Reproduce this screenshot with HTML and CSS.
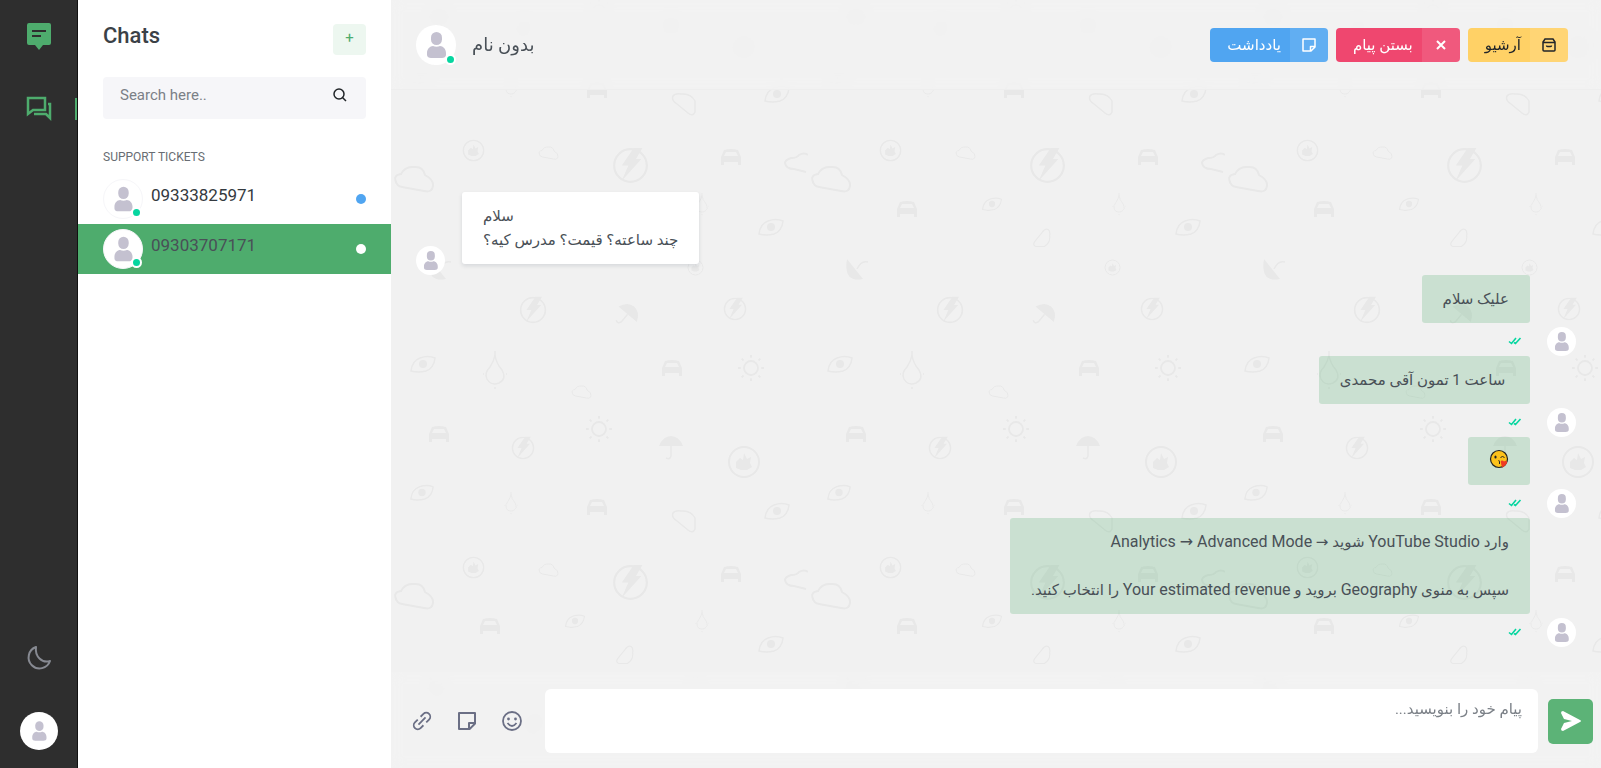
FILE: index.html
```html
<!DOCTYPE html>
<html lang="en">
<head>
    <meta charset="UTF-8">
    <meta name="viewport" content="width=device-width, initial-scale=1.0">
    <title>Chats</title>
    <link rel="stylesheet" href="styles.css">
</head>
<body>
    <!-- shared icons -->
    <svg class="sprite" aria-hidden="true">
        <symbol id="person" viewBox="0 0 40 40">
            <rect x="15" y="7" width="11" height="13" rx="5.5"/>
            <path d="M11 28c0-4 3-7 6-7 2 1 5 1 7 0 3 0 6 3 6 7v2c0 2-2 3-4 3H15c-2 0-4-1-4-3z"/>
        </symbol>
        <symbol id="note" viewBox="0 0 24 24">
            <path d="M21 15L15 21H4a1 1 0 0 1-1-1V4a1 1 0 0 1 1-1h16a1 1 0 0 1 1 1zM19 5H5v14h8v-5a1 1 0 0 1 1-1h5zM18.200 15H15v3.200z"/>
        </symbol>
        <symbol id="ticks" viewBox="0 0 14 8">
            <path d="M1 4.500 3.500 6.500 8 1M6 5.500 7.500 6.500 12.500 1" fill="none" stroke="currentColor" stroke-width="1.600"/>
        </symbol>
        <symbol id="p-bolt" viewBox="-17 -17 34 34">
            <circle r="15" fill="none" stroke="currentColor" stroke-width="2"/>
            <path d="M3-16h8L5-6h5L-8 14-2 0h-6z" fill="currentColor"/>
        </symbol>
        <symbol id="p-apple" viewBox="-17 -17 34 34">
            <circle r="15" fill="none" stroke="currentColor" stroke-width="2"/>
            <path d="M-8 0l4-4 3 2 1-7 3 6 4-2-1 6 2 4-5 3h-6l-5-2z" fill="currentColor"/>
        </symbol>
        <symbol id="p-car" viewBox="-11 -9 22 18">
            <path d="M-10 8V0l3-7q7-2 14 0l3 7v8H7V5H-7v3zM-7-1H7L5-5H-5z" fill="currentColor" fill-rule="evenodd"/>
        </symbol>
        <symbol id="p-eye" viewBox="-14 -10 28 20">
            <path d="M-12 7Q-11-3-3-6 5-9 12-6 11 4 3 7-5 9-12 7z" fill="none" stroke="currentColor" stroke-width="1.500"/>
            <circle r="4" fill="currentColor"/>
        </symbol>
        <symbol id="p-cloud" viewBox="-21 -14 42 28">
            <path d="M-18 3q-3-7 5-8 4-8 13-7 9-1 11 8 9 5 8 11-1 7-9 5L-12 8q-5-1-6-5z" fill="none" stroke="currentColor" stroke-width="2"/>
        </symbol>
        <symbol id="p-sun" viewBox="-15 -15 30 30">
            <circle r="7.500" fill="none" stroke="currentColor" stroke-width="2"/>
            <path d="M0-14v3M0 11v3M-14 0h3M11 0h3M-10-10l2 2M8 8l2 2M-10 10l2-2M8-8l2-2" stroke="currentColor" stroke-width="2"/>
        </symbol>
        <symbol id="p-umbrella" viewBox="-13 -13 26 26">
            <path d="M-12-1Q-8-11 0-11T12-1z" fill="currentColor"/>
            <path d="M0-1v10q-1 4-5 2" fill="none" stroke="currentColor" stroke-width="1.500"/>
        </symbol>
        <symbol id="p-drop" viewBox="-12 -20 24 40">
            <path d="M0-19v4q1 8 7 15 5 9-3 13-8 3-12-4-3-6 3-12 4-6 5-12M-12 4h1M11 4h1M0 17v2" fill="none" stroke="currentColor" stroke-width="1.500"/>
        </symbol>
        <symbol id="p-leaf" viewBox="-13 -13 26 26">
            <path d="M-11-8q2-3 8-2Q7-11 11-3V8q-2 5-7 1L-7 0q-6-4-4-8z" fill="none" stroke="currentColor" stroke-width="1.500"/>
        </symbol>
        <symbol id="p-dish" viewBox="-12 -12 24 24">
            <path d="M-9-11 7 9Q-13 13-9-11z" fill="currentColor"/>
            <path d="M1-1q4-9 11-7" fill="none" stroke="currentColor" stroke-width="1.500"/>
        </symbol>
    </svg>

    <div class="app">
        <nav class="rail" aria-label="Main">
            <a class="rail-link" href="#" aria-label="Home">
                <svg width="24" height="27" viewBox="0 0 24 27"><path fill="currentColor" fill-rule="evenodd" d="M2 0h20a2 2 0 0 1 2 2v18a2 2 0 0 1-2 2h-6l-4 5-4-5H2a2 2 0 0 1-2-2V2a2 2 0 0 1 2-2zM5 7v2h14V7zM5 12v2h9v-2z"/></svg>
            </a>
            <a class="rail-link active" href="#" aria-label="Chats">
                <svg width="26" height="26" viewBox="0 0 26 26" fill="none" stroke="currentColor" stroke-width="2.500"><path d="M2 2h17v12H7l-5 4zM8 18h12l4 4V8h-2"/></svg>
            </a>
            <button class="rail-link moon" type="button" aria-label="Dark mode">
                <svg width="26" height="26" viewBox="0 0 26 26" fill="none" stroke="currentColor" stroke-width="2" stroke-linejoin="round"><path d="M10 2a11 11 0 1 0 14 14q-6 2-10.500-2.500T10 2z"/></svg>
            </button>
            <button class="avatar profile" type="button" aria-label="Profile"><svg><use href="#person"/></svg></button>
        </nav>

        <aside class="sidebar">
            <div class="sidebar-top">
                <h1>Chats</h1>
                <button class="add" type="button" aria-label="New chat">+</button>
            </div>
            <form class="search">
                <input type="text" placeholder="Search here.." aria-label="Search">
                <button type="button" aria-label="Find">
                    <svg width="14" height="14" viewBox="0 0 14 14" fill="none" stroke="currentColor" stroke-width="1.500"><circle cx="6" cy="6" r="5"/><path d="M9.500 9.500 13 13"/></svg>
                </button>
            </form>
            <h2>SUPPORT TICKETS</h2>
            <ul class="tickets">
                <li>
                    <a class="ticket" href="#">
                        <span class="avatar"><svg><use href="#person"/></svg><i class="status"></i></span>
                        <span class="number">09333825971</span>
                        <i class="dot"></i>
                    </a>
                </li>
                <li>
                    <a class="ticket selected" href="#">
                        <span class="avatar"><svg><use href="#person"/></svg><i class="status"></i></span>
                        <span class="number">09303707171</span>
                        <i class="dot"></i>
                    </a>
                </li>
            </ul>
        </aside>

        <main class="chat">
            <svg class="wallpaper" aria-hidden="true">
                <defs>
                    <pattern id="doodles" x="0" y="120" width="417" height="417" patternUnits="userSpaceOnUse">
                        <svg x="0" y="0" width="417" height="417" viewBox="0 120 417 417">
                            <use href="#p-apple" x="71" y="139" width="23" height="23"/>
                            <use href="#p-cloud" x="147" y="146" width="21" height="14"/>
                            <use href="#p-bolt" x="221" y="147" width="37" height="37"/>
                            <use href="#p-car" x="329" y="148" width="22" height="18"/>
                            <path d="M417 155q-4-3-9 0-2 3-8 3-6 2-6 5 1 6 9 6l12 3" fill="none" stroke="currentColor" stroke-width="2"/>
                            <use href="#p-cloud" x="2" y="165" width="42" height="28"/>
                            <use href="#p-car" x="88" y="200" width="22" height="18"/>
                            <use href="#p-eye" x="173" y="196" width="22" height="16"/>
                            <use href="#p-drop" x="304" y="192" width="14" height="24"/>
                            <use href="#p-leaf" x="224" y="228" width="20" height="20" transform="rotate(90 234 238)"/>
                            <use href="#p-eye" x="366" y="217" width="28" height="20"/>
                            <use href="#p-dish" x="36" y="258" width="24" height="24"/>
                            <use href="#p-apple" x="296" y="259" width="17" height="17"/>
                            <use href="#p-bolt" x="128" y="296" width="28" height="28"/>
                            <use href="#p-umbrella" x="223" y="302" width="26" height="26" transform="rotate(40 236 315)"/>
                            <use href="#p-bolt" x="332" y="297" width="24" height="24"/>
                            <use href="#p-eye" x="18" y="354" width="28" height="20"/>
                            <use href="#p-drop" x="92" y="350" width="24" height="40"/>
                            <use href="#p-cloud" x="180" y="385" width="21" height="14"/>
                            <use href="#p-car" x="270" y="359" width="22" height="18"/>
                            <use href="#p-sun" x="346" y="354" width="28" height="28"/>
                            <use href="#p-car" x="37" y="425" width="22" height="18"/>
                            <use href="#p-sun" x="194" y="415" width="28" height="28"/>
                            <use href="#p-bolt" x="120" y="436" width="24" height="24"/>
                            <use href="#p-umbrella" x="267" y="434" width="26" height="26"/>
                            <use href="#p-apple" x="336" y="445" width="34" height="34"/>
                            <use href="#p-eye" x="18" y="483" width="26" height="19"/>
                            <use href="#p-drop" x="113" y="491" width="14" height="24"/>
                            <use href="#p-car" x="195" y="498" width="22" height="18"/>
                            <use href="#p-leaf" x="280" y="508" width="26" height="26"/>
                            <use href="#p-eye" x="372" y="501" width="28" height="20"/>
                        </svg>
                    </pattern>
                </defs>
                <rect width="100%" height="100%" fill="url(#doodles)"/>
            </svg>

            <header class="chat-header">
                <span class="avatar"><svg><use href="#person"/></svg><i class="status"></i></span>
                <h2 lang="fa" dir="rtl">بدون نام</h2>
                <div class="actions" lang="fa">
                    <button class="action blue" type="button"><span>یادداشت</span><b><svg width="18" height="18" fill="currentColor"><use href="#note"/></svg></b></button>
                    <button class="action red" type="button"><span>بستن پیام</span><b><svg width="10" height="10" viewBox="0 0 10 10" stroke="currentColor" stroke-width="2"><path d="M1 1l8 8M9 1 1 9"/></svg></b></button>
                    <button class="action yellow" type="button"><span>آرشیو</span><b><svg width="14" height="14" viewBox="0 0 14 14" fill="none" stroke="currentColor" stroke-width="1.500"><path d="M3 1h8l2 3v8a1 1 0 0 1-1 1H2a1 1 0 0 1-1-1V4zM1 4.500h12M4.500 7.500q0 1 1 1h3q1 0 1-1"/></svg></b></button>
                </div>
            </header>

            <ul class="messages" lang="fa">
                <li class="message in">
                    <span class="avatar small"><svg><use href="#person"/></svg></span>
                    <div class="bubble" dir="rtl"><p>سلام</p><p>چند ساعته؟ قیمت؟ مدرس کیه؟</p></div>
                </li>
                <li class="message out">
                    <div class="body">
                        <div class="bubble" dir="rtl"><p>علیک سلام</p></div>
                        <svg class="ticks" width="14" height="8"><use href="#ticks"/></svg>
                    </div>
                    <span class="avatar small"><svg><use href="#person"/></svg></span>
                </li>
                <li class="message out">
                    <div class="body">
                        <div class="bubble" dir="rtl"><p>&nbsp;ساعت 1 تمون آقی محمدی</p></div>
                        <svg class="ticks" width="14" height="8"><use href="#ticks"/></svg>
                    </div>
                    <span class="avatar small"><svg><use href="#person"/></svg></span>
                </li>
                <li class="message out">
                    <div class="body">
                        <div class="bubble emoji">
                            <svg width="20" height="20" viewBox="0 0 20 20" role="img" aria-label="Face blowing a kiss">
                                <circle cx="10" cy="10" r="8.500" fill="#fcc21b" stroke="#222" stroke-width="1.200"/>
                                <ellipse cx="6.500" cy="8" rx="1.100" ry="1.600" fill="#222"/>
                                <path d="M11.500 8.500q2-2 4 0M9.500 11.500q2 .5.500 1.500 2 1 0 2" fill="none" stroke="#222"/>
                                <path d="M12 14q-1-2 1-2.500 1.500 0 2 1 2-1.500 3 0 .5 2-1.500 3.500-1.500 1.500-3 2.500-1.500-2-1.500-4.500z" fill="#ee3b24"/>
                            </svg>
                        </div>
                        <svg class="ticks" width="14" height="8"><use href="#ticks"/></svg>
                    </div>
                    <span class="avatar small"><svg><use href="#person"/></svg></span>
                </li>
                <li class="message out">
                    <div class="body">
                        <div class="bubble" dir="rtl">
                            <p>وارد <span lang="en">YouTube Studio</span> شوید → <span lang="en">Analytics → Advanced Mode</span></p>
                            <br>
                            <p>سپس به منوی <span lang="en">Geography</span> بروید و <span lang="en">Your estimated revenue</span> را انتخاب کنید.</p>
                        </div>
                        <svg class="ticks" width="14" height="8"><use href="#ticks"/></svg>
                    </div>
                    <span class="avatar small"><svg><use href="#person"/></svg></span>
                </li>
            </ul>

            <form class="composer">
                <button class="tool" type="button" aria-label="Attach link">
                    <svg width="20" height="20" viewBox="0 0 20 20" fill="none" stroke="currentColor" stroke-width="1.800"><path transform="rotate(-45 10 10)" d="M8 6H4a4 4 0 0 0 0 8h4M12 6h4a4 4 0 0 1 0 8h-4M5 10h10"/></svg>
                </button>
                <button class="tool" type="button" aria-label="Note"><svg width="24" height="24" fill="currentColor"><use href="#note"/></svg></button>
                <button class="tool" type="button" aria-label="Emoji">
                    <svg width="20" height="20" viewBox="0 0 20 20" fill="none" stroke="currentColor" stroke-width="1.800"><circle cx="10" cy="10" r="9"/><path d="M5.500 12q4.500 6 9 0"/><circle cx="6.500" cy="8" r="1.400" fill="currentColor" stroke="none"/><circle cx="13.500" cy="8" r="1.400" fill="currentColor" stroke="none"/></svg>
                </button>
                <textarea lang="fa" dir="rtl" aria-label="پیام" placeholder="پیام خود را بنویسید..."></textarea>
                <button class="send" type="submit" aria-label="Send">
                    <svg width="20" height="20" viewBox="0 0 20 20" fill="currentColor"><path d="M2 0 19 9q2 1 0 2L2 20Q0 20 0 18L3 12 11 10 3 8 0 2Q0 0 2 0z"/></svg>
                </button>
            </form>
        </main>
    </div>
</body>
</html>
```
FILE: styles.css
```css
* {
    box-sizing: border-box;
}

body {
    margin: 0;
    font-family: Roboto, "DejaVu Sans", sans-serif;
    font-size: 15px;
    color: #495057;
    background-color: #fff;
}

h1, h2, p, ul {
    margin: 0;
    padding: 0;
}

ul {
    list-style: none;
}

a {
    color: inherit;
    text-decoration: none;
}

button {
    border: none;
    padding: 0;
    font-family: inherit;
    cursor: pointer;
}

.sprite {
    display: none;
}

.app {
    display: flex;
    min-height: 100vh;
}

/* left rail */
.rail {
    display: flex;
    flex-direction: column;
    align-items: center;
    width: 78px;
    padding: 18px 0;
    background-color: #2e2e2e;
    border-right: 1px solid #111;
    color: #4eac6d;
}

.rail-link {
    display: flex;
    align-items: center;
    justify-content: center;
    width: 100%;
    height: 36px;
    background: none;
    color: inherit;
}

.active {
    height: 22px;
    margin-top: 44px;
    border-right: 2px solid #4eac6d;
    border-left: 2px solid transparent;
}

.moon {
    margin-top: auto;
    margin-bottom: 36px;
    color: #878a92;
}

.avatar {
    position: relative;
    flex: none;
    display: flex;
    align-items: center;
    justify-content: center;
    width: 40px;
    height: 40px;
    border-radius: 50%;
    background-color: #fff;
    fill: #c4c1d0;
}

.avatar svg {
    width: 100%;
    height: 100%;
}

.profile {
    width: 38px;
    height: 38px;
    padding: 4px;
}

.small {
    width: 29px;
    height: 29px;
}

.status {
    position: absolute;
    right: 0;
    bottom: 0;
    width: 11px;
    height: 11px;
    border: 2px solid #fff;
    border-radius: 50%;
    background-color: #06d6a0;
}

/* ticket list */
.sidebar {
    width: 313px;
    background-color: #fff;
}

.sidebar-top {
    display: flex;
    justify-content: space-between;
    padding: 24px 25px 0;
}

h1 {
    font-size: 22px;
    font-weight: 500;
    line-height: 24px;
    color: #3b4147;
}

.add {
    width: 33px;
    height: 31px;
    padding-bottom: 4px;
    border-radius: 4px;
    background-color: #edf7f0;
    color: #4eac6d;
    font-size: 15px;
}

.search {
    display: flex;
    height: 42px;
    margin: 22px 25px 0;
    padding: 0 19px 6px 17px;
    border-radius: 4px;
    background-color: #f6f6f9;
}

.search input {
    flex: 1;
    min-width: 0;
    border: none;
    padding: 0;
    background: none;
    font: inherit;
    outline: none;
}

.search input::placeholder {
    color: #7b8087;
}

.search button {
    background: none;
    color: #212529;
}

.search svg {
    display: block;
}

.sidebar h2 {
    padding: 30px 25px 9px;
    font-size: 12px;
    font-weight: 400;
    line-height: 16px;
    color: #686d73;
}

.ticket {
    display: flex;
    align-items: center;
    gap: 8px;
    height: 50px;
    padding: 0 25px;
}

.ticket .avatar {
    border: 1px solid #f6f6f9;
}

.number {
    flex: 1;
    padding-bottom: 8px;
    font-size: 17px;
    font-weight: 400;
    line-height: 20px;
    color: #343a40;
}

.selected .number {
    color: #495057;
}

.dot {
    width: 10px;
    height: 10px;
    border-radius: 50%;
    background-color: #50a5f1;
}

.selected {
    background-color: #4eac6d;
}

.selected .dot {
    background-color: #fff;
}

/* conversation */
.chat {
    position: relative;
    flex: 1;
    min-width: 0;
    display: flex;
    flex-direction: column;
    background-color: #f1f1f1;
}

.wallpaper {
    position: absolute;
    top: 0;
    left: 0;
    width: 100%;
    height: 100%;
    color: #e8e8e8;
}

.chat-header {
    position: relative;
    display: flex;
    align-items: center;
    gap: 16px;
    height: 90px;
    padding: 0 33px 0 25px;
    border-bottom: 1px solid #eee;
    background-color: rgba(244, 244, 244, 0.6);
    backdrop-filter: blur(7px);
}

.chat-header h2 {
    font-size: 18px;
    font-weight: 500;
}

.actions {
    display: flex;
    gap: 8px;
    margin-left: auto;
}

.action {
    display: flex;
    align-items: center;
    height: 34px;
    border-radius: 4px;
    overflow: hidden;
    color: #fff;
    font-size: 15px;
    font-weight: 500;
}

.action span {
    padding: 0 9px 0 17px;
}

.action b {
    display: flex;
    align-items: center;
    justify-content: center;
    width: 38px;
    height: 100%;
    background-color: rgba(255, 255, 255, 0.1);
}

.blue {
    background-color: #50a5f1;
}

.red {
    background-color: #ef476f;
}

.yellow {
    background-color: #ffd166;
    color: #212529;
}

.messages {
    position: relative;
    flex: 1;
    display: flex;
    flex-direction: column;
    justify-content: flex-end;
    padding: 0 25px;
}

.message {
    display: flex;
    align-items: flex-end;
    gap: 17px;
}

.out {
    justify-content: flex-end;
}

.bubble {
    padding: 12px 21px;
    border-radius: 3px;
    line-height: 24px;
}

.bubble span {
    font-size: 16px;
    line-height: 20px;
}

.in .bubble {
    margin-bottom: 11px;
    background-color: #fff;
    box-shadow: 0 2px 4px rgba(15, 34, 58, 0.12);
    text-align: left;
}

.out .bubble {
    background-color: rgba(78, 172, 109, 0.24);
}

.body {
    display: flex;
    flex-direction: column;
    align-items: flex-end;
}

.emoji svg {
    display: block;
    margin-bottom: 4px;
}

.ticks {
    margin: 14px 8px 11px;
    color: #06d6a0;
}

.composer {
    position: relative;
    display: flex;
    align-items: center;
    height: 96px;
    margin-top: 25px;
    padding: 4px 8px 2px 19px;
    background-color: rgba(244, 244, 244, 0.6);
    backdrop-filter: blur(7px);
}

.tool {
    display: flex;
    justify-content: center;
    width: 24px;
    margin-right: 21px;
    background: none;
    color: #6b6f85;
}

.composer textarea {
    flex: 1;
    height: 64px;
    padding: 8px 16px;
    border: none;
    border-radius: 6px;
    background-color: #fff;
    font: inherit;
    line-height: 24px;
    resize: none;
    outline: none;
}

.composer textarea::placeholder {
    color: #7b8087;
}

.send {
    display: flex;
    align-items: center;
    justify-content: center;
    width: 45px;
    height: 45px;
    margin-left: 10px;
    border-radius: 5px;
    background-color: #5cb377;
    color: #fff;
}
```
